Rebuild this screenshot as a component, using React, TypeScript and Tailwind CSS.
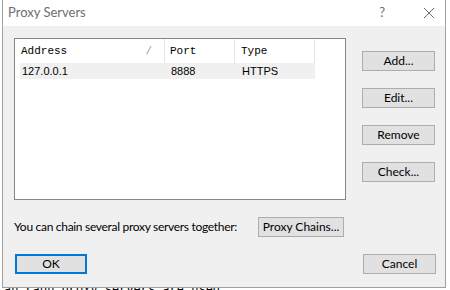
export default function App() {
  const btn =
    "flex h-[20px] items-center justify-center border border-[#adadad] bg-[#e1e1e1] text-[12px] text-black";

  return (
    <div className="relative h-[290px] w-[450px] overflow-hidden bg-white font-['Lato',sans-serif]">
      {/* window behind the dialog */}
      <div className="absolute left-[4px] top-[283px] whitespace-nowrap font-['Liberation_Mono',monospace] text-[12px] leading-[14px] text-black">
        an ragu proxy servers are used
      </div>

      <div className="absolute left-[2px] top-0 flex h-[288px] w-[444px] flex-col border border-t-0 border-[#a0a0a0] bg-[#f0f0f0]">
        {/* title bar */}
        <div className="flex h-[26px] shrink-0 items-center bg-white pl-[5px] pr-[10px]">
          <span className="text-[13px] text-[#6e6e6e]">Proxy Servers</span>
          <span className="ml-auto mr-[38px] text-[13px] text-[#6e6e6e]">?</span>
          <svg width="12" height="12" viewBox="0 0 12 12" className="text-[#6e6e6e]">
            <path d="M1 1L11 11M11 1L1 11" stroke="currentColor" strokeWidth="1" />
          </svg>
        </div>

        <div className="flex pl-[11px] pt-[12px]">
          {/* list view */}
          <div className="h-[162px] w-[332px] border border-[#828790] bg-white pl-[5px]">
            <div className="flex h-[24px] items-center font-['Liberation_Mono',monospace] text-[11px] text-black">
              <div className="flex h-full w-[145px] items-center justify-between border-r border-[#e5e5e5] pl-[1px] pr-[12px]">
                <span>Address</span>
                <span className="text-[#9a9a9a]">/</span>
              </div>
              <div className="flex h-full w-[70px] items-center border-r border-[#e5e5e5] pl-[5px]">Port</div>
              <div className="flex h-full w-[80px] items-center border-r border-[#e5e5e5] pl-[6px]">Type</div>
            </div>
            <div className="flex h-[16px] w-[295px] items-center bg-[#f0f0f0] font-['Liberation_Sans',sans-serif] text-[11px] text-black">
              <div className="w-[145px] pl-[2px]">127.0.0.1</div>
              <div className="w-[70px] pl-[6px]">8888</div>
              <div className="w-[80px] pl-[7px]">HTTPS</div>
            </div>
          </div>

          {/* side buttons */}
          <div className="ml-[16px] flex flex-col gap-[17px] pt-[13px]">
            <div className={`${btn} w-[73px]`}>Add...</div>
            <div className={`${btn} w-[73px]`}>Edit...</div>
            <div className={`${btn} w-[73px]`}>Remove</div>
            <div className={`${btn} w-[73px]`}>Check...</div>
          </div>
        </div>

        <div className="mt-[17px] flex items-center pl-[11px]">
          <span className="w-[244px] whitespace-nowrap text-[12px] tracking-[-0.3px] text-black">
            You can chain several proxy servers together:
          </span>
          <div className={`${btn} w-[86px] whitespace-nowrap`}>Proxy Chains...</div>
        </div>

        <div className="mt-[17px] flex items-center justify-between pl-[12px] pr-[9px]">
          <div className="flex h-[20px] w-[72px] items-center justify-center border-2 border-[#0078d7] bg-[#e1e1e1] text-[12px] text-black">
            OK
          </div>
          <div className={`${btn} w-[73px]`}>Cancel</div>
        </div>
      </div>
    </div>
  );
}
